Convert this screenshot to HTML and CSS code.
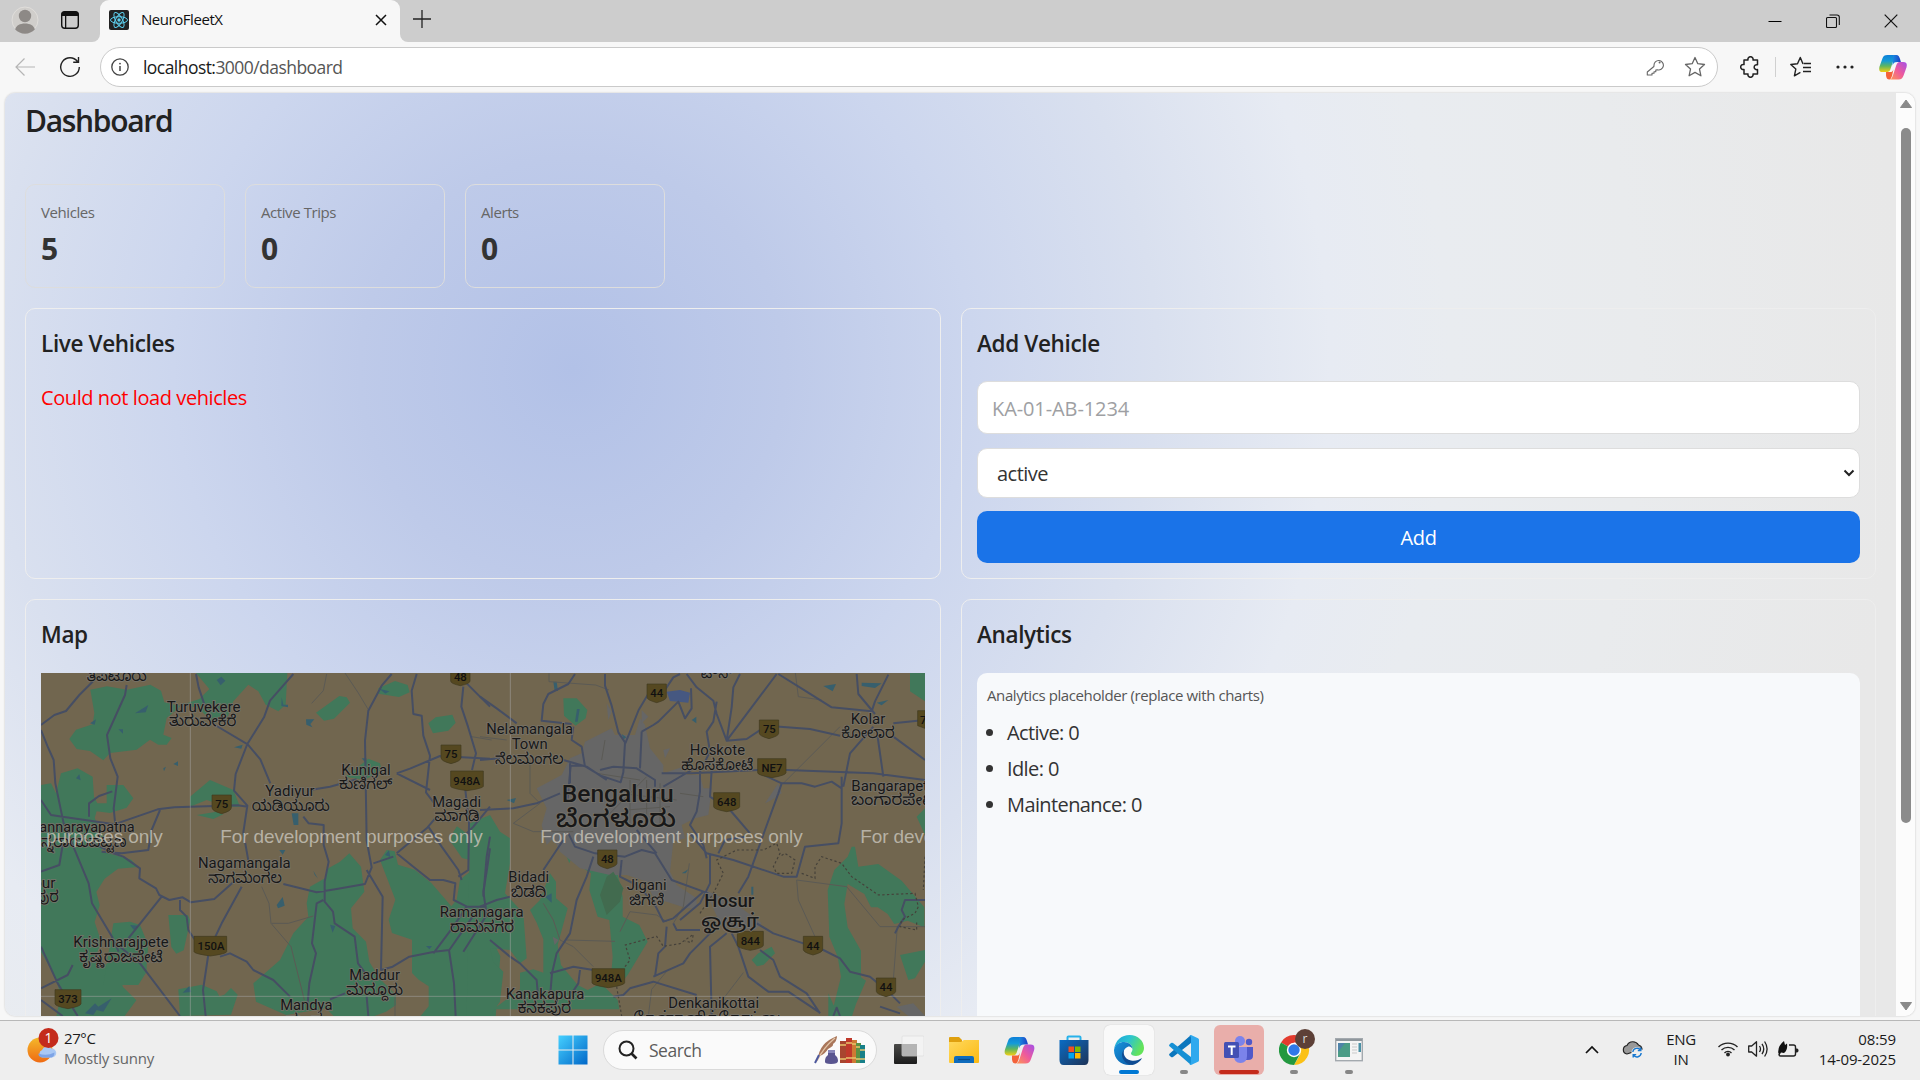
FILE: index.html
```html
<!DOCTYPE html>
<html lang="en">
<head>
<meta charset="utf-8">
<title>NeuroFleetX</title>
<link rel="stylesheet" href="styles.css">
</head>
<body>
<svg class="defs" width="0" height="0" aria-hidden="true">
  <defs>
    <linearGradient id="cpA" x1="0" y1="0" x2="0" y2="1"><stop offset="0" stop-color="#0d7fd8"/><stop offset=".35" stop-color="#149bd7"/><stop offset=".65" stop-color="#5fb65e"/><stop offset="1" stop-color="#f5cf13"/></linearGradient>
    <linearGradient id="cpB" x1="1" y1="0" x2="0" y2="1"><stop offset="0" stop-color="#a34fe8"/><stop offset=".5" stop-color="#ee5a9c"/><stop offset="1" stop-color="#ff9a4d"/></linearGradient>
    <linearGradient id="cpC" x1="0" y1="0" x2="1" y2="0"><stop offset="0" stop-color="#1a8be0"/><stop offset="1" stop-color="#1b3fc4"/></linearGradient>
    <linearGradient id="win" x1="0" y1="0" x2="1" y2="1"><stop offset="0" stop-color="#46d0ff"/><stop offset="1" stop-color="#0067c8"/></linearGradient>
    <linearGradient id="sun" x1="0" y1="0" x2="0" y2="1"><stop offset="0" stop-color="#f4b92b"/><stop offset="1" stop-color="#ef6a12"/></linearGradient>
    <linearGradient id="folder" x1="0" y1="0" x2="1" y2="1"><stop offset="0" stop-color="#ffd95e"/><stop offset="1" stop-color="#fbb912"/></linearGradient>
    <linearGradient id="store" x1="0" y1="0" x2="1" y2="1"><stop offset="0" stop-color="#0a6cc4"/><stop offset="1" stop-color="#1d3358"/></linearGradient>
    <linearGradient id="edgeTop" x1="0" y1="0" x2="1" y2=".4"><stop offset="0" stop-color="#1a9fd8"/><stop offset=".5" stop-color="#2bc3d2"/><stop offset="1" stop-color="#64e35a"/></linearGradient>
    <linearGradient id="edgeLow" x1="0" y1="0" x2="1" y2="1"><stop offset="0" stop-color="#1795de"/><stop offset="1" stop-color="#0c59a4"/></linearGradient>
    <linearGradient id="task" x1="0" y1="0" x2="0" y2="1"><stop offset="0" stop-color="#4a4a48"/><stop offset="1" stop-color="#1c1c1c"/></linearGradient>
    <symbol id="copilot" viewBox="0 0 30 28">
      <path fill="url(#cpA)" d="M9 1h11c-2 0-3 1-4 4l-4 12c-1 2-2 2.500-4 2.500H4c-3.500 0-4.500-2-3.500-6L3.500 5C4.500 2 6 1 9 1z"/>
      <path fill="url(#cpC)" d="M15 1h3.500c2.500 0 3 1.500 4 4l1 3.500h-4c-3 0-4 1-5 4z"/>
      <path fill="url(#cpB)" d="M22 8.500h4c3.500 0 4.500 2 3.500 6L26.500 23c-1 3-2.500 4.500-5.500 4.500H11c2 0 3-1.500 4-4.500l3.500-11c1-2.500 2-3.500 3.500-3.500z"/>
      <path fill="#f4623a" d="M7.500 19.500h4.500c2 0 2.500-.5 3.500-3l-1.500 7c-1 2.500-1.500 4-3 4-2 0-3-1-3.500-4z"/>
    </symbol>
  </defs>
</svg>

<header class="tabstrip">
  <div class="strip-left">
    <svg width="28" height="28" viewBox="0 0 28 28"><circle cx="14" cy="14" r="13" fill="#d0cecb" stroke="#e0dedb"/><circle cx="14" cy="10" r="6.200" fill="#8d8986"/><path d="M4.200 23.500C5 19.500 9 17.500 14 17.500s9 2 9.800 6c-2.500 2.500-6 4.200-9.800 4.200s-7.300-1.700-9.800-4.200z" fill="#8d8986"/></svg>
    <svg width="20" height="20" viewBox="0 0 20 20"><rect x="1.700" y="1.700" width="16.600" height="16.600" rx="3" fill="none" stroke="#111" stroke-width="1.400"/><path d="M1.500 6V4.500a3 3 0 0 1 3-3h11a3 3 0 0 1 3 3V6zM5 6h1.300v12H5z" fill="#111"/></svg>
  </div>
  <div class="tab">
    <svg width="20" height="20" viewBox="0 0 20 20"><rect width="20" height="20" rx="2" fill="#222"/><g fill="none" stroke="#5ccfee" stroke-width="1"><ellipse cx="10" cy="10" rx="8.500" ry="3.300"/><ellipse cx="10" cy="10" rx="8.500" ry="3.300" transform="rotate(60 10 10)"/><ellipse cx="10" cy="10" rx="8.500" ry="3.300" transform="rotate(120 10 10)"/></g><circle cx="10" cy="10" r="1.700" fill="#5ccfee"/></svg>
    <span class="tab-title">NeuroFleetX</span>
    <svg width="12" height="12" viewBox="0 0 12 12"><path d="M1 1l10 10M11 1L1 11" stroke="#111" stroke-width="1.500"/></svg>
  </div>
  <svg class="newtab" width="18" height="18" viewBox="0 0 18 18"><path d="M9 0v18M0 9h18" stroke="#222" stroke-width="1.300"/></svg>
  <div class="window-buttons">
    <svg width="14" height="14" viewBox="0 0 14 14"><path d="M.5 7.500h13" stroke="#000"/></svg>
    <svg width="14" height="14" viewBox="0 0 14 14"><path d="M1.500 3.500h8a1 1 0 0 1 1 1v8a1 1 0 0 1-1 1h-8a1 1 0 0 1-1-1v-8a1 1 0 0 1 1-1zM3.500 1h7.500a2.300 2.300 0 0 1 2.300 2.300V11" fill="none" stroke="#111" stroke-width="1.100"/></svg>
    <svg width="14" height="14" viewBox="0 0 14 14"><path d="M.7.700l12.600 12.600M13.300.7L.7 13.300" stroke="#111" stroke-width="1.200"/></svg>
  </div>
</header>

<nav class="toolbar">
  <svg width="20" height="20" viewBox="0 0 20 20"><path d="M20 10H1M9.500 1.500L1 10l8.500 8.500" fill="none" stroke="#b5b5b5" stroke-width="1.200"/></svg>
  <svg class="reload" width="22" height="22" viewBox="0 0 22 22"><path d="M18.500 5.500A9.300 9.300 0 1 0 20.300 11M19.500 1v5.300h-5.300" fill="none" stroke="#222" stroke-width="1.400"/></svg>
  <div class="address">
    <svg width="18" height="18" viewBox="0 0 18 18"><circle cx="9" cy="9" r="8.200" fill="none" stroke="#444" stroke-width="1.300"/><path d="M9 8v5" stroke="#444" stroke-width="1.500"/><circle cx="9" cy="5.600" r=".9" fill="#444"/></svg>
    <span class="url"><b>localhost:</b>3000/dashboard</span>
    <svg class="key" width="18" height="18" viewBox="0 0 18 18"><path d="M8 7.500a4.700 4.700 0 1 1 3.300 4.200L9.800 12v1.700H8v1.600H6V17H1.300v-3L7.900 8.500z" fill="none" stroke="#666" stroke-linejoin="round" stroke-width="1.100"/><circle cx="13.600" cy="4.500" r="1" fill="#666"/></svg>
    <svg width="22" height="22" viewBox="0 0 22 22"><path d="M11 1.500l2.800 6.200 6.700.8-5 4.600 1.400 6.700-5.900-3.400-5.900 3.400 1.400-6.700-5-4.600 6.700-.8z" fill="none" stroke="#666" stroke-linejoin="round" stroke-width="1.300"/></svg>
  </div>
  <svg class="puzzle" width="20" height="22" viewBox="0 0 20 22"><path d="M4 4h4a2.600 2.600 0 1 1 5 0h4.500v4.800a2.500 2.500 0 1 0 0 4.700V18H13a2.600 2.600 0 1 1-5 0H4v-4.500a2.600 2.600 0 1 1 0-5z" fill="none" stroke="#222" stroke-linejoin="round" stroke-width="1.500"/></svg>
  <i class="divider"></i>
  <svg class="favs" width="22" height="22" viewBox="0 0 22 22"><path d="M13 7.500h-.2L10.300 1.500 7.500 7.700l-6.700.8 5 4.600-1.400 6.700 6-3.400M13.500 7.500h7.500M13 11.500h8M13 15.500h8" fill="none" stroke="#222" stroke-linejoin="round" stroke-width="1.400"/></svg>
  <svg class="dots" width="18" height="4" viewBox="0 0 18 4"><g fill="#222"><circle cx="2" cy="2" r="1.600"/><circle cx="9" cy="2" r="1.600"/><circle cx="16" cy="2" r="1.600"/></g></svg>
  <svg width="28" height="26"><use href="#copilot" width="28" height="26"/></svg>
</nav>

<div class="viewport">
  <main class="page">
    <h1>Dashboard</h1>
    <section class="stats">
      <div class="stat"><span>Vehicles</span><strong>5</strong></div>
      <div class="stat"><span>Active Trips</span><strong>0</strong></div>
      <div class="stat"><span>Alerts</span><strong>0</strong></div>
    </section>
    <section class="panels">
      <article class="panel">
        <h3>Live Vehicles</h3>
        <p class="error">Could not load vehicles</p>
      </article>
      <article class="panel">
        <h3>Add Vehicle</h3>
        <form class="vehicle-form">
          <input type="text" placeholder="KA-01-AB-1234">
          <div class="select"><span>active</span><svg width="12" height="8" viewBox="0 0 12 8"><path d="M1.500 1.500L6 6l4.500-4.500" fill="none" stroke="#222" stroke-width="2"/></svg></div>
          <button type="button">Add</button>
        </form>
      </article>
      <article class="panel">
        <h3>Map</h3>
        <svg class="map" width="884" height="500" viewBox="33 39 2652 1500">
          <rect x="33" y="39" width="2652" height="1500" fill="#71664f"/>
          <g class="forest">
            <path d="M498 39h274l-5 95-22 20-38-20-22-40-30-20-45 50-20 55-40 10-40-40-50-20-20 20-30 25-10 50 25 10-15 20-25 0-25-15-40 30-80 10-20 22-40-28-40-6-22-30 20-28 50-16 5-34-12-70 50-10 60 10 70-15 32 18 10 35 45 10 60-20 30-30z"/>
            <path d="M1045 85l50-22 38 12 6 22-32 14-62-10zM858 158l70-50 22 4 10 16-48 48-30 6zM1195 190l22-18 50-8 10 24-22 24-46 8z"/>
            <path d="M33 375l30-5 15 30 15-60 50-15 45 25 4 60 10 20 28 0 0-55 50 0 30 40-20 28-50 16-40-5-6 20 30 60-10 40 90 25 20 22-60 5-40 30-25 40 10 40-15 50 20 60-20 50 40 20 25 5 20 60 40 40-30 40-40 60-60 0-100-10-10 10 0 105H33v-60l60 0-20-70 20-90-20-60-40-70z"/>
            <path d="M250 790l50-5 30 10 25 60-5 60 0 20-25 40-105 0zM480 410l60-50 70 30 20 50-40 0-60-20-50 20zM500 465l60-10 20 8-30 14zM415 765h58l8 16-20 90-22 10-15-20zM985 320l30-24 35 14 5 20-50 30-60-10z"/>
            <path d="M450 1068l-5-80 70-14 45 20 8 15 15-5 20-20 20 20-20 60zM670 970l80-70 40-80 45-50-5-40 10-50 45-25 10-30 35-20 28-25 35 40 10 75-40 50 5 60 40 40 10 60 30 50 50 50 0 30-30 20-80 30-60 0-40-40-120 20-90-40zM1050 600l20-30 24 4 10 40 50 15 50 40 60 70 16-20 10-60 50-40 16-10-60-15-35-50 10-30 10-15 120 90 20 90 0 150-30 20 20 40-20 260-140-10-20 30-40-20 0 10-55 0 10-60 50-60 0-60-30-20-20-20 0-100-60-20-10-40 20-60z"/>
          </g>
          <g transform="translate(1350 0)">
            <g class="forest">
              <path d="M-30 490l60-25 30 50 30 20 0 75-15 90 55 60 10 135-20 15-30-40-60-5 10 40 30 30-10 90-30 43H-40zM150 750l30-30 30-80 18 25 0 50 35 30-30 110 10 60 50 60 30 15 40-20 50 50 5 28H40l80-60 0-50 40-10 30 10 0-100-20-50zM258 585l60-45 40 20 50 60 20 90 0 60 50 25 25 50-60 100-20 25-30-20 5-60-10-110-35-10-25-80 5-50-30-20 15-60-30 0-20 50z M250 115l40 0 32 35-5 25-30 22-35-30z"/>
              <path d="M1115 560l10 0 10 60 60-8 70 50 68 80v60l-50-20-40 10-20-30-30-20-20 0-20-40-50-30-10 60 10 70 40 70 0 80 15 10-30 70-15 46-60-8 30-120-10-60-25-60-5-140 20-60 40-40zM1260 885l75-15v35l-30 50-20 5zM1290 39h45v85l-45-30zM1310 470l25-25v80zM815 900l20-20 40-20 10 20-34 34-20 5zM1045 1000l30 68h-30z"/>
            </g>
            <path class="city" d="M245 345l25-50 35-15 10-35 80-40 10 20 60 0 15-50 15 20 15 70 40 50 0 25 60-20 10 25 40 0 10 40 25 0 -10 80-40 10-40 20 10 40-35 10-10 90 20 40 60 40 0 30-30 0-60-20-40-10-20-50-60-20-50 0-90-20-60-50-20-40-20 20-15-60 15-50-30-60z"/>
            <g class="city"><path d="M855 430l40-60 10 30-30 20zM1250 1040l50-10 35 38h-50zM675 690l90 40 80 60-20 20-100-10zM218 830l18 10-12 15zM380 130l15 25 -10 25zM485 150l20 20-20 20zM550 270l20-5-15 30z"/></g>
            <path d="M560 95l40-5 30 8-5 30-55-5z" fill="#465881"/>
            <path d="M380 650l20-15 30 50-10 40-40 40-20-60z" fill="#426b4f"/>
          </g>
          <g class="lake">
            <path d="M560 60l14-10 12 12-14 14zM315 160l40-25-8 22zM180 190l18-12-4 16zM265 208h14v13zM755 112l5 22h14v8l-20-4zM828 178l25 0-12 14 6 10-18-8zM612 262l26-8-4 12zM1048 86l30 8-12 7zM785 460h20v35h-14zM740 735l18-24 6 26-20 8zM748 570l18 0-8 14zM900 794l16 4-8 20zM850 632l14 24-10-12zM138 355l10-12 4 18zM300 795l25 2-14 12zM458 998l20-20 6 18zM165 1060l30-30 10 10 40-25-25 40-20-5-10 15zM995 295h14v16zM430 312l14-8v14zM400 325l8-5-6 14zM1065 585l12-14 4 20zM1188 858l18 0-8 10z"/>
            <g transform="translate(1350 0)"><path d="M220 65h10l4 28h-10zM285 185l6-38h8l-6 38zM1030 78l38-6-10 22zM1145 68l60 2-20 14-40-6zM1190 128l35-8-20 16zM635 180l14-10v20zM80 420l28-6-6 16zM195 710l20-10 0 28zM605 640l20-12-8 12zM814 680h6v24h-6zM425 222l14 10-8 6z"/></g>
          </g>
          <g class="minor">
            <path d="M890 42l-10 50-35 38M945 39l40 60 30 50M695 680l22 50 6 60 60 70 40 160M725 790l50 0 75-22M1325 230l60 10M1095 1068l0-60"/>
            <g transform="translate(1350 0)">
              <path d="M207 40v25l140 10 40 15M150 310l0 90 30 30-80 60 60 25 120 0M0 230l80 10M260 840l145 4M190 730l30 50 20 60 40 20 60 60M420 815l30-60 80 10 30 20M580 790l30-50 18-130M945 30l10 80 70 10M910 370l170-170M950 660l5 60 50 110M950 660l150 20 100 120 135 0M505 1068l10-80 50-60M690 1068l100-130M350 340l130 20M365 300l10-60M420 400l170 20M440 450l130-10M450 360v130M500 360v120M380 470l120-120M540 370l0 120M600 400l70 10M1240 960l12-160"/>
            </g>
          </g>
          <g class="road">
            <path d="M33 195l40-30 35-12 40-48 45-45M290 75l-5 30-54 120 10 70 22 55-12 95 5 50M33 210l20 50 18 40 5 70 25 120 75 180 10 60 60 100 20 45M498 42l8 40 20 60M790 42l-70 80-18 50-50 80-35 90-5 50 40 45-12 80 15 85M555 195l98 58 38 45 30 72M33 420l30 45 40 6 150 22 130-45 50-6 120-4 70-2 30 4M177 470v-40l30-22 40-14M390 450l-25 60-10 60-80 10-60-5M190 550l60 30 30 10 50 35-2 30 50 30 10 20 30 15 40-8 25 15 70-10 65-58M635 680l-60 110-38 80-18 120 8 78M395 710l-100 125M450 720v30l20 20 5 40 20 30M570 890l30-10 50 25 20 25 60 30 50 50M270 860l60 50 120 158M33 860l50 110 60 98M33 985l80-40 15-30M33 1020l65 48M33 635l55-20 10-60M840 390l60-10 80-22M1085 42l-30 35-40 75-10 90 5 300 15 80-20 50-85 15-60 10-100-25M820 470l16 20 45 5 0 60 15 50-12 60v60l25 30 5 35 60 40 10 80 30 40M880 720l-20 10-14 120 12 30-20 90-5 60M1010 630l48 80-5 220 35-10 50-30 75-15 45-5 70-100M1160 42l-15 50 5 70 25 5 5 60 20 60-12 110 30 40M1300 80l-6 60 20 60 24 80-12 50M1100 340l40-14 90-38 150 8M1100 340l100 50M1310 70l70 70M1100 580l90-75 30-35M1100 580l50 40 50 40 40 0 36 10-5 50 40 20M1195 500l40 60 50 70 10 30M1305 380l12 110-2 140-30 20M1030 610l60-20M1257 870l15 100 5 98M1210 880l60-80 40-60 60 0M1380 440l-50 60-20 20M1380 565l-10 70-10 60 10 70-70 110M1010 1010l5 58M900 1018l45-18"/>
            <g transform="translate(1350 0)">
              <path d="M0 110l50 35 60 45M285 42l-20 30-60 30-15 30-5 50 90 10M375 42v35l20 60 20 80 20 30-5 90-8 30-60-20-50-30-40 0-10 110M270 310l0 60M0 300l60-5M250 300l70 20 60 40M360 330l40-10 70 5 55 35 0 20M280 200l-5 40 30 20 10 60M436 250l40-100 30-50M620 42l30 40 50 40 10 40 30 80M485 215l35-20 15-10 60-60 20 50 20-30-2-60M485 215l-5 110M600 42l-20 10-40 60M780 42l-20 40-5 60-15 100M710 125l-10 60-20 30 10 60-30 60 0 60-10 60-20 40 40 60 10 40M890 42l-60 80-90 120 60-5 60-40 130 10 90 20M895 42l80 50 80 50 120 12 10-30 40-80M1130 42l5 60 50 60M695 330l-5 80 60 40 60 70M550 380l85-50M0 450l100-5 70-15 70-30M715 580l20-40 60-10M690 580v90l-30 60-60 50M630 520l50 60 80 20 150 50 40 0 25-90 100-10 10-60 0-140M545 340l90 0 200-10 85 0 260 10 155 20M1190 210l20 140M1180 200l-70 80-20 100M905 370l60 0 40 10 50-15 30 20M905 370l-10 30-40 110-50 140-30 50M905 370l-65-30M1240 230l95 70M1240 190l95-10M265 520l20 40 60 20 90 10 50-20 40 10 50 80 110 40M470 510l60 70M425 600l-5 50 50 25 50 50 30 60 30-10 90-80M580 790l10 20 70 0M30 530l-10 60-10 120M0 740l50-20 40-10M190 630l60-90M340 590l-20 60-30 70-20 100-40 60-14 60-5 60M30 840l60 50 30 20 50 50 5 60M210 940l70-20 60 10M300 930l-5 40-20 30M400 1010l30-5 20-20 70-20 130 40M560 800l-5 60-20 20-10 70M690 820l-60 60-20 30-90 40M755 820l20 40 30 90 60 45 60 0 90 60M740 820l-50 40 5 208M830 790l50 30 90 30 60 20 50 25 30 40 60 15 60 50 30 30M840 870l40 30 20 50 80 50 40 60M1335 720l-60 0-10 30 10 20-20 30-10 20M1060 1068l10-25 10 25M1200 1040l60 20"/>
            </g>
          </g>
          <g class="state" transform="translate(1350 0)"><path d="M435 920l15-20-14-45 94-26 20 30 50-8 40-28 -5 25-20-5M410 980l15 88M660 760l40-60 30-60-20-40 60-30 80 0 40-20 10 30-20 40 10 20 45 0 10-40-30-20-15 10M965 640l40 15 0-35 20-30 60 20 30 40 80 55 110-5 10 40-10 20-40 20-5 20 50 10 0-30M1335 590l-5 100"/></g>
          <path class="tile" d="M481 39v1500M1441 39v1500M33 1009h2652"/>
          <g class="shields">
            <path d="M1262 39h58v24q0 8-29 14q-29-6-29-14zM1233 255h60v38q0 10-30 18q-30-8-30-18zM1262 333h98v46q0 6-49 13q-49-7-49-13zM546 405h58v38q0 10-29 18q-29-8-29-18zM492 829h98v46q0 6-49 13q-49-7-49-13zM75 989h78v42q0 8-39 15q-39-7-39-15z"/>
            <path transform="translate(1350 0)" d="M501 72h58v40q0 8-29 16q-29-8-29-16zM838 180h58v40q0 8-29 16q-29-8-29-16zM833 296h85v42q0 8-42 15q-43-7-43-15zM701 398h78v42q0 8-39 15q-39-7-39-15zM353 570h58v40q0 8-29 16q-29-8-29-16zM772 814h78v42q0 8-39 15q-39-7-39-15zM970 829h58v40q0 8-29 16q-29-8-29-16zM336 926h98v42q0 8-49 15q-49-7-49-15zM1189 954h58v40q0 8-29 16q-29-8-29-16zM1313 152h22v53l-22-8z"/>
          </g>
          <g class="road-no">
            <text x="1291" y="62">48</text><text x="1263" y="295">75</text><text x="1310" y="376">948A</text><text x="575" y="445">75</text><text x="543" y="871">150A</text><text x="114" y="1029">373</text>
            <text x="1880" y="112">44</text><text x="2218" y="220">75</text><text x="2226" y="336">NE7</text><text x="2090" y="438">648</text><text x="1732" y="610">48</text><text x="2161" y="855">844</text><text x="2349" y="870">44</text><text x="1735" y="965">948A</text><text x="2568" y="994">44</text><text x="2680" y="192">7</text>
          </g>
          <g class="place">
            <text x="260" y="62" textLength="180" lengthAdjust="spacingAndGlyphs">ತಿಪಟೂರು</text>
            <text x="521" y="155" textLength="222" lengthAdjust="spacingAndGlyphs">Turuvekere</text><text x="518" y="198" textLength="202" lengthAdjust="spacingAndGlyphs">ತುರುವೇಕೆರೆ</text>
            <text x="1008" y="345" textLength="148" lengthAdjust="spacingAndGlyphs">Kunigal</text><text x="1007" y="388" textLength="160" lengthAdjust="spacingAndGlyphs">ಕುಣಿಗಲ್</text>
            <text x="780" y="408" textLength="148" lengthAdjust="spacingAndGlyphs">Yadiyur</text><text x="782" y="452" textLength="234" lengthAdjust="spacingAndGlyphs">ಯಡಿಯೂರು</text>
            <text x="1280" y="440" textLength="147" lengthAdjust="spacingAndGlyphs">Magadi</text><text x="1281" y="484" textLength="135" lengthAdjust="spacingAndGlyphs">ಮಾಗಡಿ</text>
            <text x="171" y="516" textLength="286" lengthAdjust="spacingAndGlyphs">annarayapatna</text><text x="162" y="560" textLength="256" lengthAdjust="spacingAndGlyphs">ನ್ನರಾಯಪಟ್ಟಣ</text>
            <text x="643" y="624" textLength="278" lengthAdjust="spacingAndGlyphs">Nagamangala</text><text x="645" y="668" textLength="222" lengthAdjust="spacingAndGlyphs">ನಾಗಮಂಗಲ</text>
            <text x="43" y="683">pur</text><text x="50" y="726" textLength="72" lengthAdjust="spacingAndGlyphs">ಪುರ</text>
            <text x="273" y="862" textLength="286" lengthAdjust="spacingAndGlyphs">Krishnarajpete</text><text x="273" y="907" textLength="250" lengthAdjust="spacingAndGlyphs">ಕೃಷ್ಣರಾಜಪೇಟೆ</text>
            <text x="1034" y="960" textLength="152" lengthAdjust="spacingAndGlyphs">Maddur</text><text x="1034" y="1005" textLength="170" lengthAdjust="spacingAndGlyphs">ಮದ್ದೂರು</text>
            <text x="829" y="1049" textLength="157" lengthAdjust="spacingAndGlyphs">Mandya</text><text x="829" y="1094" textLength="120" lengthAdjust="spacingAndGlyphs">ಮಂಡ್ಯ</text>
            <text x="1355" y="772" textLength="252" lengthAdjust="spacingAndGlyphs">Ramanagara</text><text x="1356" y="815" textLength="192" lengthAdjust="spacingAndGlyphs">ರಾಮನಗರ</text>
            <text x="1499" y="223" textLength="260" lengthAdjust="spacingAndGlyphs">Nelamangala</text><text x="1499" y="267" textLength="108" lengthAdjust="spacingAndGlyphs">Town</text><text x="1498" y="311" textLength="206" lengthAdjust="spacingAndGlyphs">ನೆಲಮಂಗಲ</text>
            <text x="2062" y="286" textLength="166" lengthAdjust="spacingAndGlyphs">Hoskote</text><text x="2062" y="330" textLength="216" lengthAdjust="spacingAndGlyphs">ಹೊಸಕೋಟೆ</text>
            <text x="2514" y="191" textLength="104" lengthAdjust="spacingAndGlyphs">Kolar</text><text x="2514" y="235" textLength="160" lengthAdjust="spacingAndGlyphs">ಕೋಲಾರ</text>
            <text x="2591" y="392" textLength="254" lengthAdjust="spacingAndGlyphs">Bangarapete</text><text x="2590" y="436" textLength="254" lengthAdjust="spacingAndGlyphs">ಬಂಗಾರಪೇಟೆ</text>
            <text x="1496" y="665" textLength="122" lengthAdjust="spacingAndGlyphs">Bidadi</text><text x="1496" y="710" textLength="106" lengthAdjust="spacingAndGlyphs">ಬಿಡದಿ</text>
            <text x="1850" y="690" textLength="120" lengthAdjust="spacingAndGlyphs">Jigani</text><text x="1850" y="734" textLength="104" lengthAdjust="spacingAndGlyphs">ಜಿಗಣಿ</text>
            <text x="1545" y="1016" textLength="236" lengthAdjust="spacingAndGlyphs">Kanakapura</text><text x="1543" y="1060" textLength="160" lengthAdjust="spacingAndGlyphs">ಕನಕಪುರ</text>
            <text x="2051" y="1043" textLength="272" lengthAdjust="spacingAndGlyphs">Denkanikottai</text><text x="2040" y="1088" textLength="460" lengthAdjust="spacingAndGlyphs">தேன்கனிக்கோட்டை</text>
            <text x="2060" y="54" textLength="96" lengthAdjust="spacingAndGlyphs">ಟೌನ್</text>
            <text class="town" x="2098" y="740" textLength="150" lengthAdjust="spacingAndGlyphs">Hosur</text><text class="town" x="2100" y="800" textLength="174" lengthAdjust="spacingAndGlyphs">ஓசூர்</text>
            <text class="metro" x="1763" y="425" textLength="336" lengthAdjust="spacingAndGlyphs">Bengaluru</text><text class="metro" x="1758" y="500" textLength="360" lengthAdjust="spacingAndGlyphs">ಬೆಂಗಳೂರು</text>
          </g>
          <g class="watermark">
            <text x="-389" y="550" textLength="787">For development purposes only</text>
            <text x="571" y="550" textLength="787">For development purposes only</text>
            <text x="1531" y="550" textLength="787">For development purposes only</text>
            <text x="2491" y="550" textLength="787">For development purposes only</text>
          </g>
        </svg>
      </article>
      <article class="panel">
        <h3>Analytics</h3>
        <div class="analytics">
          <p>Analytics placeholder (replace with charts)</p>
          <ul><li>Active: 0</li><li>Idle: 0</li><li>Maintenance: 0</li></ul>
        </div>
      </article>
    </section>
  </main>
  <div class="scrollbar">
    <svg width="14" height="10" viewBox="0 0 14 10"><path d="M7 1l5.500 7.500h-11z" fill="#8a8a8a" stroke="#8a8a8a" stroke-linejoin="round"/></svg>
    <i></i>
    <svg width="14" height="10" viewBox="0 0 14 10"><path d="M7 9l5.500-7.500h-11z" fill="#8a8a8a" stroke="#8a8a8a" stroke-linejoin="round"/></svg>
  </div>
</div>

<footer class="taskbar">
  <div class="weather">
    <svg width="32" height="36" viewBox="0 0 32 36"><circle cx="13" cy="22" r="12.500" fill="url(#sun)"/><path d="M15 29.500a4 4 0 0 1 0-7.500 5.500 5.500 0 0 1 9.500-1.500 4.500 4.500 0 0 1 .5 9z" fill="#a9c8f4"/><path d="M15 29.500q-4-1-3.500-4 8 3 16-1 0 4-3 5z" fill="#7ea4e6"/><circle cx="21.500" cy="10" r="10" fill="#c42b1c"/><text x="21.500" y="15" fill="#fff" font-size="14" text-anchor="middle">1</text></svg>
    <div class="weather-text"><span>27°C</span><small>Mostly sunny</small></div>
  </div>
  <div class="apps">
    <div class="app"><svg width="30" height="30" viewBox="0 0 30 30"><path d="M.5.500h14v14H.5zM15.500.500h14v14h-14zM.5 15.500h14v14H.5zM15.500 15.500h14v14h-14z" fill="url(#win)"/></svg></div>
    <div class="search">
      <svg width="20" height="20" viewBox="0 0 20 20"><circle cx="8.500" cy="8.500" r="7" fill="none" stroke="#222" stroke-width="2"/><path d="M13.500 13.500l5 5" stroke="#222" stroke-width="2.600"/></svg>
      <span>Search</span>
      <svg width="52" height="30" viewBox="0 0 52 30"><path d="M4 24Q5 8 23 1q0 5-4 8 1 2-5 5-3 5-8 7z" fill="#a9765a"/><path d="M3 26Q9 13 21 3" stroke="#e2c4a6" fill="none" stroke-width="1.300"/><path d="M1 28l4-8" stroke="#4b579c" stroke-width="2"/><path d="M14 16h7v4q3 2 3 6 0 3-7 3t-6-3q0-4 3-6z" fill="#5a5690"/><rect x="14" y="15" width="7" height="3" fill="#8886b8"/><path d="M26 6h6v22h-6z" fill="#a8452f"/><path d="M32 3h6v25h-6z" fill="#c0392b"/><path d="M38 5h5v23h-5z" fill="#cf7a33"/><path d="M42 8h5v20h-5z" fill="#5b9144"/><path d="M46 10h5v18h-5z" fill="#178089"/><path d="M26 10h6M32 8h6M38 9h4M42 12h4M46 15h5M26 24h6M32 23h6M38 23h4M42 24h4M46 24h5" stroke="#e8c46c" stroke-width="1.500"/></svg>
    </div>
    <div class="app"><svg width="30" height="30" viewBox="0 0 30 30"><rect y="9" width="23" height="20" rx="1" fill="url(#task)"/><rect x="8" y="1" width="22" height="20" rx="1" fill="#f3f3f3" stroke="#ddd" stroke-width=".7"/><path d="M8 9h15v12H8z" fill="#b4b4b4"/></svg></div>
    <div class="app"><svg width="30" height="30" viewBox="0 0 30 30"><path d="M0 3q0-1 1-1h9l3 3v5H0z" fill="#dfa00f"/><path d="M0 7h12l3-2h15v22q0 1-1 1H1q-1 0-1-1z" fill="url(#folder)"/><path d="M5 28v-5q0-2 2-2h16q2 0 2 2v5z" fill="#0f6cbd"/><path d="M9 24.500h12" stroke="#0a4a87" stroke-width="1.200"/></svg></div>
    <div class="app"><svg width="31" height="28"><use href="#copilot" width="31" height="28"/></svg></div>
    <div class="app"><svg width="30" height="30" viewBox="0 0 30 30"><path d="M8.500 6V2.500q0-1 1-1h11q1 0 1 1V6" fill="none" stroke="#27b1ea" stroke-width="2"/><path d="M.5 5h29v20q0 5-4 5h-21q-4 0-4-5z" fill="url(#store)"/><path d="M9.500 11.500H15V17H9.500z" fill="#f25022"/><path d="M16 11.500h5.500V17H16z" fill="#7fba00"/><path d="M9.500 18H15v5.500H9.500z" fill="#00a4ef"/><path d="M16 18h5.500v5.500H16z" fill="#ffb900"/></svg></div>
    <div class="app active"><svg width="30" height="30" viewBox="0 0 30 30"><path d="M0 15C1 5 8 0 15.500 0 24 0 30 6 30 13c0 5-4 8-8 8-3 0-5-1-5-2.500s1.500-2 1.500-4.500c0-4-4-7-8.500-7C5 7 1 10 0 15z" fill="url(#edgeTop)"/><path d="M0 15c1-6 6-8 10-8 4.500 0 8.500 3 8.500 7-1-2-3-3-5-2-4 2-5 6-3.500 10.500 1.500 4.500 5 7 9 7-1 .4-2.500.5-4 .5C7 30 0 24 0 15z" fill="url(#edgeLow)"/><path d="M10 15c-1 3 0 9 7 10.500 4 1 8-.500 11-2.500-2 4-6 6.500-10 7-6-.500-10-6-10-10 0-2 .7-4 2-5z" fill="#0f4c93"/></svg><i class="run blue"></i></div>
    <div class="app"><svg width="30" height="30" viewBox="0 0 30 30"><path d="M22 0v8L4 22q-1 .600-2 0l-1.500-1.500q-.8-1 0-1.800z" fill="#0b76bd"/><path d="M22 30v-8L4 8Q3 7.400 2 8L.5 9.500q-.8 1 0 1.800z" fill="#1690d4"/><path d="M22 0l7 3.200q1 .5 1 1.500v20.600q0 1-1 1.500L22 30q-1 .3-1.500-.5Q22 29 22 27V3q0-2-1.500-2.500Q21 0 22 0z" fill="#2fa9ee"/></svg><i class="run"></i></div>
    <div class="app alert"><svg width="30" height="28" viewBox="0 0 30 28"><circle cx="25" cy="6" r="3.200" fill="#5059c9"/><path d="M20 11h9v9q0 4-5 4h-4z" fill="#5059c9"/><circle cx="16" cy="5" r="5" fill="#7b83eb"/><path d="M11 11h12v9q0 7-6.500 7T10 20z" fill="#7b83eb"/><rect y="6" width="15" height="16" rx="1.500" fill="#4450b4"/><path d="M4 10.500h7.500M7.700 10.500V19" stroke="#fff" stroke-width="2"/></svg><i class="run red"></i></div>
    <div class="app"><svg class="chrome" width="36" height="36" viewBox="0 0 36 36"><path d="M15 21L2 13.500A15 15 0 0 1 28 13.500H15z" fill="#e33b2e"/><path d="M15 21l13-7.500A15 15 0 0 1 15 36l6.500-11z" fill="#fbc116"/><path d="M15 21l6 4-6 11A15 15 0 0 1 2 13.500z" fill="#23983f"/><circle cx="15" cy="21" r="7.200" fill="#fff"/><circle cx="15" cy="21" r="5.700" fill="#3078e8"/><circle cx="26" cy="10" r="10" fill="#5d4037"/><text x="26" y="14" fill="#ddd" font-size="12" text-anchor="middle">r</text></svg><i class="run"></i></div>
    <div class="app"><svg width="28" height="24" viewBox="0 0 28 24"><rect x=".7" y=".7" width="26.600" height="22" fill="#f4f4f4" stroke="#a3a9ae" stroke-width="1.400"/><path d="M1 2h26" stroke="#8f979d" stroke-width="2"/><path d="M3 5h12v14H3z" fill="#4b9c86"/><path d="M3 5h7L3 14z" fill="#4e83a8"/><path d="M17 6h5M17 9h5M17 12h5M17 15h5" stroke="#c9c9c9"/><path d="M23.500 5H26v9h-2.500z" fill="#4a90a4"/></svg><i class="run"></i></div>
  </div>
  <div class="tray">
    <svg class="chev" width="14" height="9" viewBox="0 0 14 9"><path d="M1 8l6-6 6 6" fill="none" stroke="#111" stroke-width="1.700"/></svg>
    <svg class="cloud" width="22" height="18" viewBox="0 0 22 18"><path d="M5 14a4.300 4.300 0 0 1 0-8.500A6.500 6.500 0 0 1 16.500 5 4.800 4.800 0 0 1 20 9z" fill="#999" stroke="#222" stroke-width="1.200"/><circle cx="15" cy="12.500" r="5.500" fill="#eee"/><path d="M10.800 12a4.300 4.300 0 0 1 7.700-2M19.200 13a4.300 4.300 0 0 1-7.700 2.200M18.800 7.500v3h-3M11.200 17.600v-3h3" fill="none" stroke="#1878d0" stroke-width="1.400"/></svg>
    <div class="lang">ENG<br>IN</div>
    <svg class="wifi" width="20" height="16" viewBox="0 0 20 16"><g fill="none" stroke="#222" stroke-width="1.400"><path d="M.5 6a13.500 13.500 0 0 1 19 0M3.500 9a9.300 9.300 0 0 1 13 0M6.500 12a5 5 0 0 1 7 0"/></g><circle cx="10" cy="13.500" r="1.900" fill="#222"/></svg>
    <svg class="vol" width="20" height="18" viewBox="0 0 20 18"><path d="M.7 6h3L8.500 1.800v14.400L3.700 12h-3zM11.500 6q2 3 0 6M14 3.800q3.500 5.200 0 10.400M16.600 1.500q5 7.500 0 15" fill="none" stroke="#222" stroke-linejoin="round" stroke-width="1.300"/></svg>
    <svg class="batt" width="21" height="17" viewBox="0 0 21 17"><path d="M11 4h4.500q2 0 2 2v7q0 2-2 2h-13q-1.500 0-1.500-2" fill="none" stroke="#222" stroke-width="1.400"/><path d="M18 7.500h1q1.500 0 1.500 2t-1.500 2h-1z" fill="#222"/><path d="M.3 12Q-.5 5 6 0l1 4 2-1.500Q10 9 6 12l-3-.5L1.500 14z" fill="#111"/></svg>
    <div class="clock">08:59<br>14-09-2025</div>
  </div>
</footer>
</body>
</html>
```
FILE: styles.css
```css
* { box-sizing: border-box; }
body {
  margin: 0;
  width: 1920px;
  height: 1080px;
  overflow: hidden;
  display: flex;
  flex-direction: column;
  background: #f7f7f7;
  color: #222;
  font-family: "Open Sans", "Noto Sans", sans-serif;
}
svg { flex: none; display: block; }
.defs { position: absolute; }

/* Browser tab strip */
.tabstrip {
  flex: none;
  height: 42px;
  display: flex;
  align-items: flex-start;
  background: #f7f7f7;
}
.strip-left {
  width: 100px;
  height: 42px;
  padding: 0 0 2px 11px;
  display: flex;
  align-items: center;
  gap: 21px;
  background: #cdcdcd;
  border-bottom-right-radius: 8px;
}
.tab {
  width: 300px;
  height: 42px;
  padding: 0 13px 3px 9px;
  display: flex;
  align-items: center;
  background: #f7f7f7;
  border-radius: 9px 9px 0 0;
  box-shadow: -9px -33px 0 0 #cdcdcd, 9px -33px 0 0 #cdcdcd;
}
.tab-title { flex: 1; margin-left: 12px; padding-bottom: 2px; font-size: 15px; letter-spacing: -0.45px; color: #111; }
.newtab, .window-buttons { background: #cdcdcd; }
.newtab { box-sizing: content-box; padding: 10px 0 14px 13px; border-bottom-left-radius: 8px; }
.window-buttons {
  flex: 1;
  height: 42px;
  padding: 1px 22px 2px 0;
  display: flex;
  justify-content: flex-end;
  align-items: center;
  gap: 44px;
}

/* Browser toolbar */
.toolbar {
  flex: none;
  height: 51px;
  padding: 0 13px 1px 15px;
  display: flex;
  align-items: center;
}
.reload { margin-left: 24px; }
.address {
  flex: none;
  width: 1618px;
  height: 40px;
  margin-left: 19px;
  padding: 0 11px 0 10px;
  display: flex;
  align-items: center;
  background: #fff;
  border: 1px solid #cacaca;
  border-radius: 20px;
}
.url { flex: 1; margin-left: 14px; padding-bottom: 1px; font-size: 17.5px; letter-spacing: -0.55px; color: #555; }
.url b { font-weight: 400; color: #1a1a1a; }
.key { margin-right: 20px; }
.puzzle { margin-left: 22px; }
.divider { width: 1px; height: 20px; margin-left: 15px; background: #d0d0d0; }
.favs { margin-left: 14px; }
.dots { margin: 0 25px 0 24px; }

/* Page viewport */
.viewport {
  flex: none;
  height: 923px;
  margin: 0 5px;
  display: flex;
  overflow: hidden;
  border-radius: 10px;
  box-shadow: 0 0 2px #bbb;
}
.page {
  flex: 1;
  height: 923px;
  padding: 0 20px;
  overflow: hidden;
  background: radial-gradient(circle 1330px at 30% 30%, #b2c1e7 0, #becae9 16%, #ccd6ee 30%, #d9e0ef 44%, #e7ebf3 57%, #e9ecf0 66%, #e9ebed 80%, #e8e8e8 100%);
}
h1 { margin: 7px 0 0; font-size: 30px; line-height: 42px; font-weight: 600; letter-spacing: -1.3px; }
.stats { display: flex; gap: 20px; margin-top: 42px; }
.stat {
  width: 200px;
  height: 104px;
  padding: 16px 15px;
  display: flex;
  flex-direction: column;
  border: 1px solid #ddd;
  border-radius: 10px;
}
.stat span { font-size: 15px; line-height: 22px; letter-spacing: -0.42px; color: #666; }
.stat strong { margin-top: 5px; font-size: 30px; line-height: 42px; font-weight: 700; letter-spacing: -0.6px; color: #333; }
.panels {
  display: grid;
  grid-template-columns: 916px 915px;
  grid-template-rows: 271px 600px;
  gap: 20px;
  margin-top: 20px;
}
.panel { padding: 19px 15px 0; border: 1px solid #eee; border-radius: 10px; }
h3 { margin: 0 0 22px; font-size: 22.5px; line-height: 32px; font-weight: 600; letter-spacing: -0.35px; }
.error { margin: 0; font-size: 20px; line-height: 32px; letter-spacing: -0.42px; color: #f00; }
.vehicle-form { display: flex; flex-direction: column; margin-top: -23px; padding-top: 22px; }
.vehicle-form input, .select {
  height: 53px;
  border: 1px solid #ddd;
  border-radius: 10px;
  background: #fff;
  font: 20px "Open Sans", sans-serif;
}
.vehicle-form input { padding: 2px 14px 0; letter-spacing: -0.1px; }
.vehicle-form input::placeholder { color: #9e9fa3; opacity: 1; }
.select {
  height: 50px;
  margin: 14px 0 13px;
  padding: 0 4px 0 19px;
  display: flex;
  align-items: center;
  justify-content: space-between;
  letter-spacing: -0.5px;
  color: #333;
}
.select span { padding-top: 1px; }
.vehicle-form button {
  height: 52px;
  border: 0;
  border-radius: 10px;
  background: #1a73e8;
  color: #fff;
  font: 20px "Open Sans", sans-serif;
  letter-spacing: -0.3px;
}
.analytics { height: 500px; padding: 10px; border-radius: 10px; background: #f7f9fb; color: #333; }
.analytics p { margin: 0; font-size: 15px; line-height: 25px; letter-spacing: -0.4px; color: #555; }
.analytics ul { margin: 7px 0 0; padding-left: 20px; font-size: 20px; line-height: 36px; letter-spacing: -0.6px; }

/* Map */
.forest { fill: #41785a; }
.city { fill: #666666; }
.lake { fill: #375f6d; }
.minor path { fill: none; stroke: #5b5a55; stroke-width: 3; }
.road path { fill: none; stroke: #464e63; stroke-width: 6; stroke-linejoin: round; }
.state path { fill: none; stroke: #45413a; stroke-width: 3.5; stroke-dasharray: 7 7; }
.tile { fill: none; stroke: #aaa; stroke-opacity: .5; stroke-width: 3; }
.shields path { fill: #554820; stroke: #40391f; stroke-width: 2; }
.road-no text { font: 500 34px Roboto, sans-serif; fill: #111; text-anchor: middle; }
.place text {
  font: 46px Roboto, "Noto Sans Kannada", "Noto Sans Tamil", sans-serif;
  fill: #181818;
  stroke: #77736b;
  stroke-width: 5;
  paint-order: stroke;
  text-anchor: middle;
}
.place .town { font-size: 56px; font-weight: 500; }
.place .metro { font-size: 74px; font-weight: 500; }
.watermark text { font: 57px "Liberation Sans", sans-serif; fill: #c4c0b6; fill-opacity: .85; }

/* Scrollbar */
.scrollbar {
  width: 19px;
  padding: 6px 0 5px;
  display: flex;
  flex-direction: column;
  align-items: center;
  background: #fcfcfc;
}
.scrollbar i { width: 10px; height: 695px; margin: 19px 0 auto; border-radius: 5px; background: #8b8b8b; }

/* Taskbar */
.taskbar {
  flex: none;
  height: 60px;
  margin-top: 4px;
  display: grid;
  grid-template-columns: 548px auto 1fr;
  align-items: center;
  background: #eee;
  border-top: 1px solid #b8b8b8;
  color: #1b1b1b;
}
.weather { display: flex; align-items: flex-start; padding: 0 0 5px 27px; }
.weather-text { display: flex; flex-direction: column; margin: 0 0 0 5px; font-size: 15px; line-height: 20px; letter-spacing: -0.4px; }
.weather-text small { font-size: 15px; letter-spacing: -0.2px; color: #666; }
.apps { display: flex; align-items: center; gap: 5px; margin-bottom: 2px; }
.app { position: relative; width: 50px; height: 50px; display: flex; align-items: center; justify-content: center; border-radius: 6px; }
.app.active { background: #f9f9f9; box-shadow: 0 0 1px #bbb; }
.app.alert { background: #e9aeaa; }
.run { position: absolute; left: 21px; bottom: 1px; width: 8px; height: 4px; border-radius: 2px; background: #868686; }
.run.blue { left: 15px; width: 20px; background: #0078d4; }
.run.red { left: 5px; width: 40px; background: #c42b1c; }
.chrome { margin: -6px -6px 0 0; }
.search {
  width: 274px;
  height: 40px;
  margin-right: 2px;
  padding: 0 10px 0 14px;
  display: flex;
  align-items: center;
  background: #fafafa;
  border: 1px solid #dadada;
  border-radius: 20px;
}
.search span { flex: 1; margin-left: 11px; font-size: 17.5px; letter-spacing: -0.5px; color: #5c5c5c; }
.tray { display: flex; align-items: center; justify-content: flex-end; padding: 0 24px 3px 0; font-size: 15px; line-height: 20px; }
.cloud { margin-left: 23px; }
.lang { width: 32px; margin: 0 21px; text-align: center; letter-spacing: -0.3px; }
.vol { margin: 0 10px; }
.clock { width: 97px; text-align: right; letter-spacing: -0.1px; }
```
